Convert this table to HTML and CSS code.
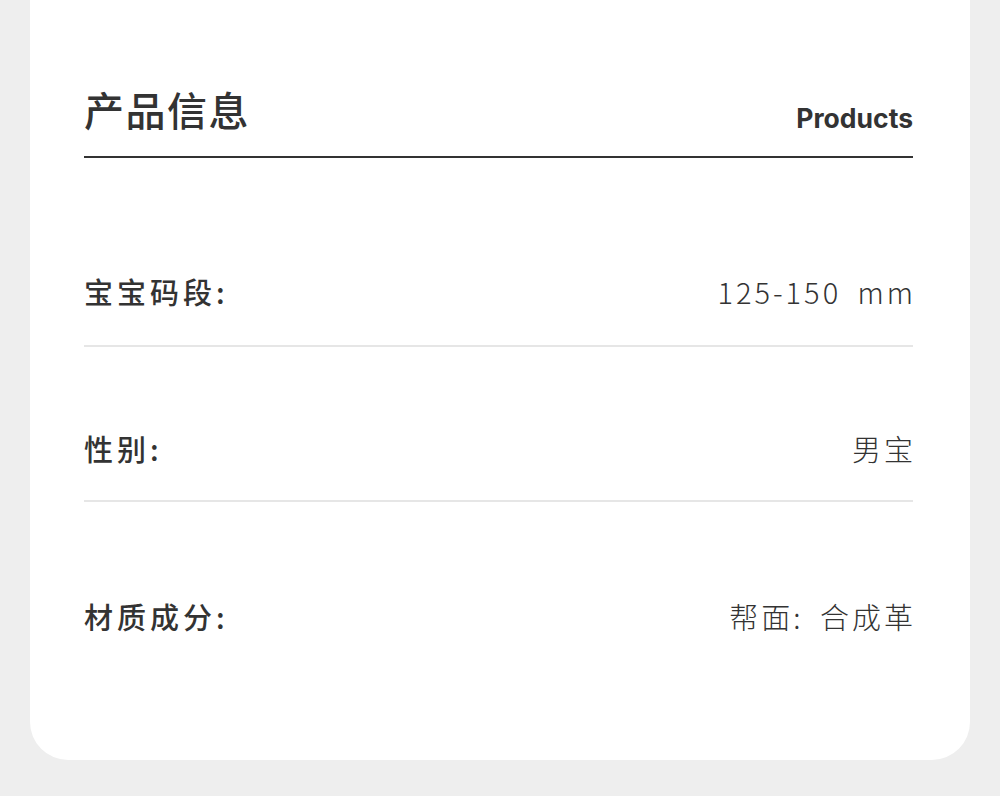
FILE: index.html
```html
<!DOCTYPE html>
<html lang="zh-CN">
<head>
<meta charset="utf-8">
<title>产品信息</title>
<link rel="stylesheet" href="styles.css">
</head>
<body>
<div class="card">
  <div class="header">
    <h1 class="title">产品信息</h1>
    <span class="subtitle">Products</span>
  </div>
  <div class="row row-first">
    <span class="label">宝宝码段:</span>
    <span class="value">125-150 mm</span>
  </div>
  <div class="row">
    <span class="label">性别:</span>
    <span class="value">男宝</span>
  </div>
  <div class="row row-last">
    <span class="label">材质成分:</span>
    <span class="value">帮面: 合成革</span>
  </div>
</div>
</body>
</html>
```
FILE: styles.css
```css
html, body {
  margin: 0;
  padding: 0;
  background: #eeeeee;
  font-family: "Noto Sans CJK SC", "Noto Sans", sans-serif;
  color: #333333;
}
.card {
  margin: 0 30px;
  height: 760px;
  box-sizing: border-box;
  background: #ffffff;
  border-radius: 0 0 38px 38px;
  padding: 0 57px 0 54px;
  display: flex;
  flex-direction: column;
}
.header {
  display: flex;
  justify-content: space-between;
  align-items: flex-end;
  padding-top: 89px;
  padding-bottom: 27px;
  border-bottom: 2px solid #333333;
}
.title {
  margin: 0;
  font-size: 40px;
  line-height: 40px;
  font-weight: 500;
  letter-spacing: 1.5px;
}
.subtitle {
  font-family: Inter, "Noto Sans", sans-serif;
  font-weight: 700;
  font-size: 26.5px;
  line-height: 30px;
  margin-bottom: -4px;
}
.row {
  display: flex;
  justify-content: space-between;
  align-items: center;
  padding: 81px 0 32px;
  border-bottom: 2px solid #e6e6e6;
}
.row-first {
  padding-top: 113px;
  padding-bottom: 34px;
}
.row-last {
  padding-top: 94px;
  border-bottom: none;
}
.label {
  font-size: 29px;
  line-height: 40px;
  font-weight: 500;
  letter-spacing: 4px;
}
.value {
  font-size: 29px;
  line-height: 40px;
  font-weight: 300;
  letter-spacing: 3px;
  word-spacing: 7px;
  margin-right: -3px;
}
```
